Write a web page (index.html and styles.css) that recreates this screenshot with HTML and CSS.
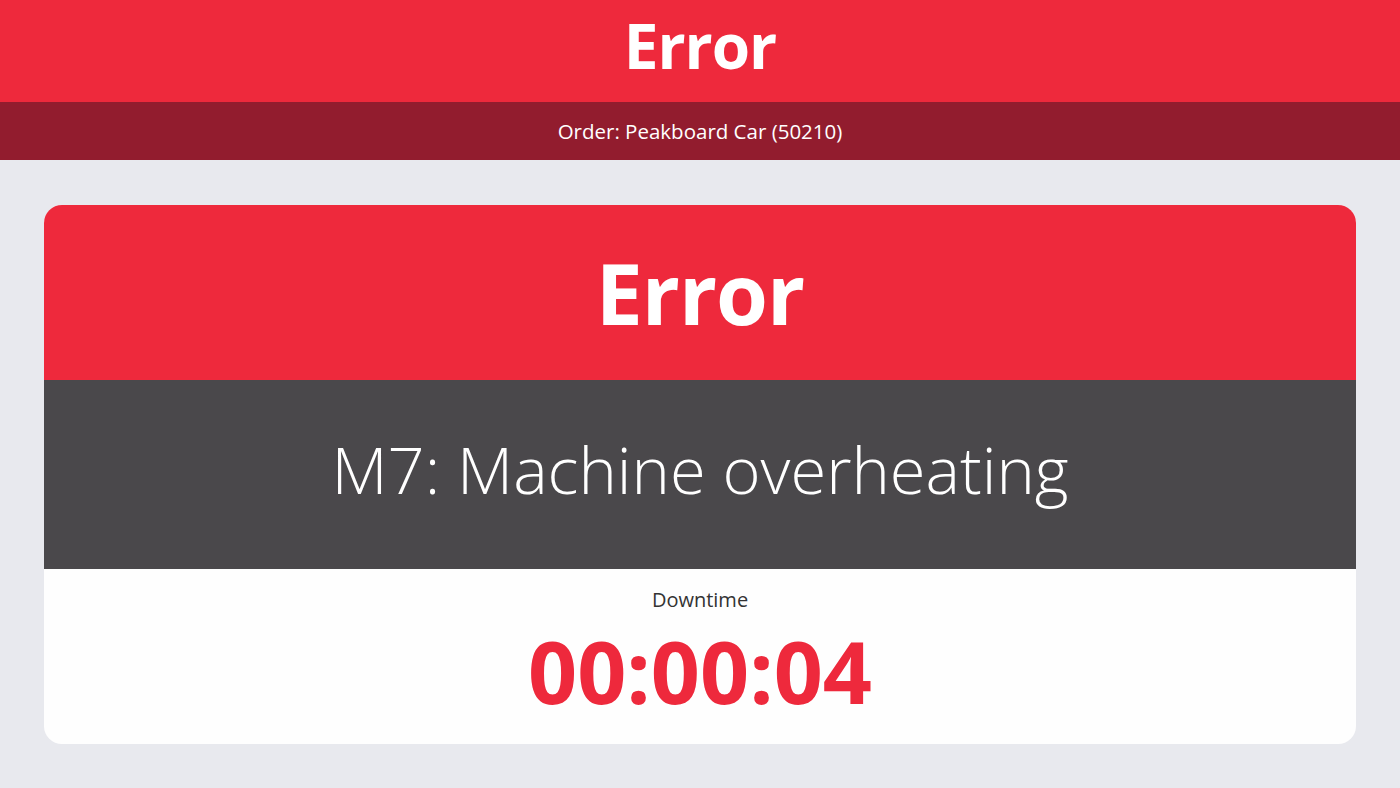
FILE: index.html
```html
<!DOCTYPE html>
<html lang="en">
<head>
<meta charset="utf-8">
<title>Error</title>
<link rel="stylesheet" href="styles.css">
</head>
<body>
  <header class="status-bar">
    <h1 class="status-title">Error</h1>
  </header>
  <div class="order-bar">Order: Peakboard Car (50210)</div>
  <main class="content">
    <section class="card">
      <div class="card-state">Error</div>
      <div class="card-message">M7: Machine overheating</div>
      <div class="card-downtime">
        <div class="downtime-label">Downtime</div>
        <div class="downtime-value">00:00:04</div>
      </div>
    </section>
  </main>
</body>
</html>
```

FILE: styles.css
```css
html, body {
  margin: 0;
  padding: 0;
  height: 100%;
}

body {
  display: flex;
  flex-direction: column;
  background: #e8e9ee;
  font-family: "Open Sans", "Noto Sans", sans-serif;
  color: #ffffff;
}

.status-bar {
  height: 102px;
  box-sizing: border-box;
  padding-bottom: 13px;
  background: #ee293c;
  display: flex;
  align-items: center;
  justify-content: center;
}

.status-title {
  margin: 0;
  font-size: 62px;
  font-weight: 700;
  line-height: 1;
  letter-spacing: -1px;
}

.order-bar {
  height: 58px;
  background: #921c2e;
  display: flex;
  align-items: center;
  justify-content: center;
  font-size: 20.5px;
}

.content {
  flex: 1;
  padding: 45px 44px 44px;
  display: flex;
}

.card {
  flex: 1;
  display: flex;
  flex-direction: column;
  border-radius: 18px;
  overflow: hidden;
  background: #fefefe;
}

.card-state {
  height: 175px;
  background: #ee293c;
  display: flex;
  align-items: center;
  justify-content: center;
  font-size: 84px;
  font-weight: 700;
  line-height: 1;
  letter-spacing: -1px;
}

.card-message {
  height: 189px;
  box-sizing: border-box;
  padding-bottom: 12px;
  background: #4a484b;
  display: flex;
  align-items: center;
  justify-content: center;
  font-size: 65px;
  font-weight: 350;
}

.card-downtime {
  flex: 1;
  display: flex;
  flex-direction: column;
  align-items: center;
  padding-top: 18px;
}

.downtime-label {
  font-size: 20px;
  color: #333333;
  line-height: 26px;
}

.downtime-value {
  margin-top: 6px;
  font-size: 86px;
  font-weight: 700;
  line-height: 1.2;
  color: #ee293c;
}
```
